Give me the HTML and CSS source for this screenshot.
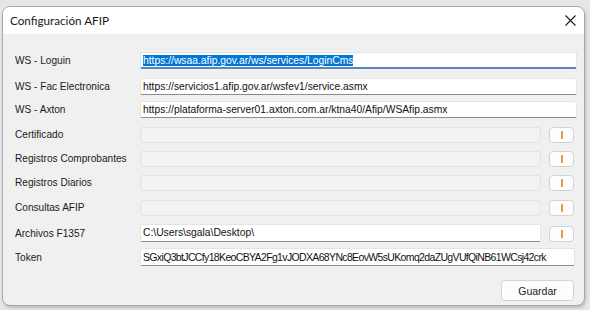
FILE: index.html
```html
<!DOCTYPE html>
<html lang="es">
<head>
<meta charset="utf-8">
<link rel="stylesheet" href="styles.css">
</head>
<body>
<div class="window">
  <div class="titlebar">
    <span class="title">Configuración AFIP</span>
    <svg class="close" width="11" height="11" viewBox="0 0 11 11"><path d="M0.5 0.5 L10.5 10.5 M10.5 0.5 L0.5 10.5" stroke="#1a1a1a" stroke-width="1.1" fill="none"/></svg>
  </div>
  <div class="body">
    <div class="form">
      <div class="label r1">WS - Loguin</div>
      <div class="field wide focused r1"><span class="sel">https://wsaa.afip.gov.ar/ws/services/LoginCms</span></div>

      <div class="label r2">WS - Fac Electronica</div>
      <div class="field wide r2">https://servicios1.afip.gov.ar/wsfev1/service.asmx</div>

      <div class="label r3">WS - Axton</div>
      <div class="field wide r3">https://plataforma-server01.axton.com.ar/ktna40/Afip/WSAfip.asmx</div>

      <div class="label r4">Certificado</div>
      <div class="field disabled r4"></div>
      <div class="btn browse r4"><span class="bar"></span></div>

      <div class="label r5">Registros Comprobantes</div>
      <div class="field disabled r5"></div>
      <div class="btn browse r5"><span class="bar"></span></div>

      <div class="label r6">Registros Diarios</div>
      <div class="field disabled r6"></div>
      <div class="btn browse r6"><span class="bar"></span></div>

      <div class="label r7">Consultas AFIP</div>
      <div class="field disabled r7"></div>
      <div class="btn browse r7"><span class="bar"></span></div>

      <div class="label r8">Archivos F1357</div>
      <div class="field tall r8">C:\Users\sgala\Desktop\</div>
      <div class="btn browse r8"><span class="bar"></span></div>

      <div class="label r9">Token</div>
      <div class="field token tall r9">SGxiQ3btJCCfy18KeoCBYA2Fg1vJODXA68YNc8EovW5sUKomq2daZUgVUfQiNB61WCsj42crk</div>
    </div>
    <div class="footer">
      <div class="btn save">Guardar</div>
    </div>
  </div>
</div>
</body>
</html>
```
FILE: styles.css
```css
html, body {
  margin: 0;
  padding: 0;
}
body {
  width: 590px;
  height: 310px;
  background: #e6e6e6;
  overflow: hidden;
  font-family: "Liberation Sans", Arial, sans-serif;
}
.window {
  margin: 6px 0 0 2px;
  width: 581px;
  height: 298px;
  border: 1px solid #a9a9a9;
  border-radius: 8px;
  overflow: hidden;
  background: #f0f0f0;
  box-shadow: 1px 2px 3px rgba(0,0,0,0.18);
  display: flex;
  flex-direction: column;
}
.titlebar {
  height: 27px;
  background: #ffffff;
  display: flex;
  align-items: center;
  justify-content: space-between;
  padding: 0 8px 0 7px;
  flex: none;
}
.title {
  font-family: Lato, "Open Sans", sans-serif;
  font-size: 11.7px;
  color: #1a1a1a;
  margin-top: -1px;
}
.body {
  padding: 18px 7px 0 12px;
  display: flex;
  flex-direction: column;
}
.form {
  display: grid;
  grid-template-columns: 125px 1fr 8px 25px 3px;
  grid-template-rows: 26px 23px 26px 24px 24px 25px 24px 24px 22px;
  align-items: start;
}
.label {
  grid-column: 1;
  font-size: 10.1px;
  color: #1b1b1b;
  height: 17px;
  line-height: 17px;
  white-space: nowrap;
}
.field {
  grid-column: 2;
  box-sizing: border-box;
  height: 17px;
  background: #ffffff;
  border: 1px solid #e4e4e4;
  border-bottom-color: #8c8c8c;
  border-radius: 2px;
  font-size: 10.3px;
  line-height: 15px;
  padding: 0 2px;
  color: #111;
  white-space: nowrap;
  overflow: hidden;
}
.field.wide {
  grid-column: 2 / 6;
}
.field.token {
  grid-column: 2 / 5;
  font-size: 10.5px;
  letter-spacing: -0.65px;
  margin-right: -1px;
}
.field.tall {
  height: 18px;
  line-height: 16px;
}
.field.focused {
  border-bottom: 2px solid #5a86b8;
  line-height: 15px;
}
.sel {
  background: #0078d7;
  color: #ffffff;
}
.field.disabled {
  height: 16px;
  background: #f2f2f2;
  border: 1px solid #e2e2e2;
  border-radius: 3px;
}
.btn {
  box-sizing: border-box;
  background: #fdfdfd;
  border: 1px solid #d3d3d3;
  border-radius: 4px;
  display: flex;
  align-items: center;
  justify-content: center;
}
.browse {
  grid-column: 4;
  height: 16px;
}
.r8.browse {
  margin-top: 2px;
}
.bar {
  width: 2px;
  height: 8px;
  background: #e39a50;
}
.r1 { grid-row: 1; }
.r2 { grid-row: 2; }
.r3 { grid-row: 3; }
.r4 { grid-row: 4; }
.r5 { grid-row: 5; }
.r6 { grid-row: 6; }
.r7 { grid-row: 7; }
.r8 { grid-row: 8; }
.r9 { grid-row: 9; }
.label.r9 { margin-top: 1px; }
.label.r8 { margin-top: 1px; }
.label.r4, .label.r5, .label.r6, .label.r7 { margin-top: -1px; }
.footer {
  display: flex;
  justify-content: flex-end;
  padding: 10px 3px 0 0;
}
.save {
  width: 73px;
  height: 21px;
  font-size: 10.5px;
  color: #1b1b1b;
}
```
